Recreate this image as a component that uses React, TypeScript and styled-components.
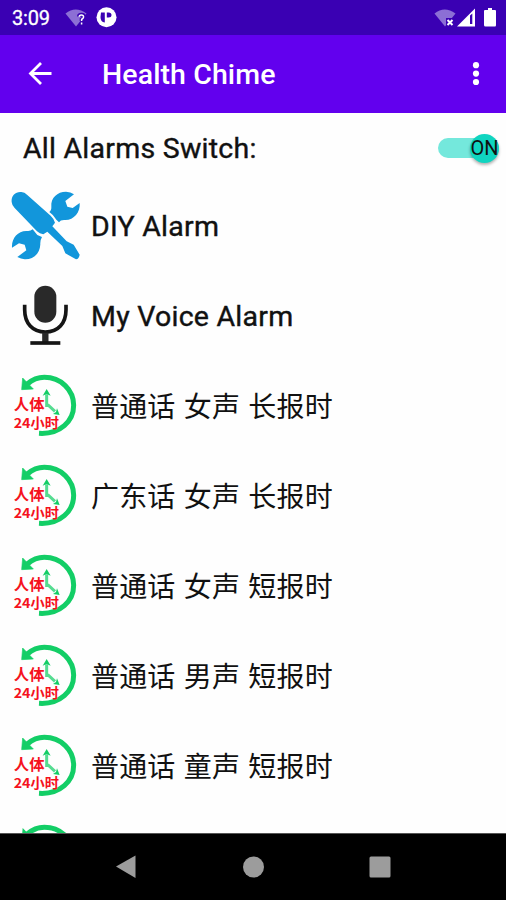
import React from "react";
import styled, { createGlobalStyle } from "styled-components";

const GlobalStyle = createGlobalStyle`
  * { box-sizing: border-box; }
  body { margin: 0; background: #fff; }
`;

const Screen = styled.div`
  width: 506px;
  height: 900px;
  display: flex;
  flex-direction: column;
  overflow: hidden;
  background: #fefefe;
  color: #111;
  font-family: Roboto, "Noto Sans CJK SC", sans-serif;
`;

const StatusBar = styled.header`
  height: 35px;
  flex: none;
  display: flex;
  align-items: center;
  justify-content: space-between;
  padding-left: 12px;
  background: #3a00b3;
  color: #fff;
`;

const StatusGroup = styled.div`
  display: flex;
  align-items: center;
  height: 35px;
`;

const Clock = styled.span`
  width: 48px;
  font-size: 20px;
  line-height: 35px;
  letter-spacing: -0.2px;
  padding-top: 1px;
  -webkit-text-stroke: 0.3px currentColor;
`;

const AppBar = styled.div`
  height: 78px;
  flex: none;
  display: flex;
  align-items: center;
  background: #6200ee;
  color: #fff;
`;

const IconButton = styled.button<{ $width: number }>`
  width: ${(p) => p.$width}px;
  height: 78px;
  padding: 0;
  border: 0;
  background: none;
  color: inherit;
  svg { display: block; }
`;

const Title = styled.h1`
  flex: 1;
  margin: 0;
  font-size: 28.5px;
  font-weight: 500;
  line-height: 78px;
  padding-top: 2px;
  letter-spacing: 0.1px;
`;

const Content = styled.main`
  height: 720px;
  flex: none;
  overflow: hidden;
`;

const SwitchRow = styled.div`
  height: 68px;
  display: flex;
  align-items: center;
  justify-content: space-between;
  padding: 2px 7px 0 23px;
`;

const Label = styled.span`
  padding-top: 2px;
  font-size: 28.5px;
  line-height: 40px;
  letter-spacing: 0.25px;
  white-space: pre;
  -webkit-text-stroke: 0.4px currentColor;
`;

const ChimeLabel = styled(Label)`
  padding-top: 3px;
  font-size: 28px;
  letter-spacing: 0.15px;
  word-spacing: 1.2px;
  -webkit-text-stroke: 0;
`;

const Track = styled.div`
  width: 61px;
  height: 20px;
  display: flex;
  align-items: center;
  justify-content: flex-end;
  border-radius: 10px;
  background: #74e8dc;
`;

const Thumb = styled.div`
  width: 29px;
  height: 29px;
  flex: none;
  display: flex;
  align-items: center;
  justify-content: center;
  border-radius: 50%;
  background: #10d5c0;
  box-shadow: 0 2px 3px rgba(0, 0, 0, 0.3);
  font-size: 20px;
  line-height: 29px;
`;

const Row = styled.div`
  height: 90px;
  display: flex;
  align-items: center;
  svg { flex: none; }
`;

const NavBar = styled.nav`
  height: 67px;
  flex: none;
  display: flex;
  align-items: center;
  justify-content: center;
  background: #000;
  border-top: 1px solid #555;
`;

const NavCell = styled.div`
  width: 126.5px;
  display: flex;
  justify-content: center;
`;

const ToolsIcon = () => (
  <svg width="91" height="90" viewBox="0 3 273 270" fill="#1296db">
    <path d="M35 66C33 48 46 34 64 36Q74 37 81 44L152 107Q161 115 165 128L157 139L200 184L221 194L239 224Q237 236 228 238L196 220L187 198L142 155L130 163Q119 161 111 154L44 84Q36 77 35 66Z" />
    <path d="M148 96Q155 92 154 79C152 54 172 35 198 35Q212 35 222 43L196 63L202 80L218 84L239 69C242 98 219 123 192 120Q181 120 177 127L169 119Q160 104 148 96Z" />
    <path d="M98 148L112 165L126 171Q120 181 121 193C120 222 99 239 74 238Q63 237 52 231L79 211L74 194L57 190L36 203C34 175 54 151 82 153Q91 154 98 148Z" />
  </svg>
);

const MicIcon = () => (
  <svg width="91" height="90" viewBox="0 -12 273 270">
    <rect x="103" y="32" width="66" height="111" rx="33" fill="#292929" />
    <path d="M74 89V104C74 145 98 171 136 171S198 145 198 104V89" fill="none" stroke="#151515" strokeWidth="11" />
    <path d="M136 173V203" stroke="#292929" strokeWidth="19" />
    <path d="M91 204H181" stroke="#151515" strokeWidth="11" />
  </svg>
);

const ClockText = styled.text`
  font-family: "Noto Sans CJK SC", sans-serif;
  font-weight: 700;
  fill: #f5121d;
`;

const BodyClockIcon = () => (
  <svg width="91" height="90" viewBox="0 -12 273 270">
    <path d="M82 57C98 43 114 37 133 37C183 37 221 75 221 121C221 168 181 209 117 205" fill="none" stroke="#13ce66" strokeWidth="15" />
    <path d="M68 39L65 74L100 72Z" fill="#13ce66" stroke="#13ce66" strokeWidth="2" />
    <path d="M140 126V88M143 119L165 139" fill="none" stroke="#55dc91" strokeWidth="9" />
    <path d="M140 72L128 92L140 87L152 92ZM179 150L159 147L168 141L171 130Z" fill="#13ce66" />
    <ClockText x="41" y="135" fontSize="46" textLength="93">人体</ClockText>
    <ClockText x="41" y="188" fontSize="40" textLength="136" lengthAdjust="spacingAndGlyphs">24小时</ClockText>
  </svg>
);

const WifiShape = () => (
  <path d="M0 5Q10-3 21 5L10.5 18Z" fill="#8c6fd5" />
);

const chimes = [
  "普通话 女声 长报时",
  "广东话 女声 长报时",
  "普通话 女声 短报时",
  "普通话 男声 短报时",
  "普通话 童声 短报时",
];

export default function App() {
  return (
    <Screen>
      <GlobalStyle />
      <StatusBar>
        <StatusGroup>
          <Clock>3:09</Clock>
          <svg width="60" height="35" viewBox="60 0 60 35">
            <g transform="translate(65.5 8.5)"><WifiShape /></g>
            <path d="M79 16.5Q79 14.8 81.5 14.8T84 17Q84 18.2 81.7 19.5V21M81.7 22.5V25" stroke="#3a00b3" strokeWidth="4" fill="none" />
            <path d="M79.2 16.8Q79.3 15 81.4 15T83.6 17Q83.6 18.2 81.6 19.5V21M81.6 22.5V24.5" stroke="#fff" strokeWidth="1.5" fill="none" />
            <circle cx="106.5" cy="17.3" r="10" fill="#fff" />
            <path d="M101 12.5H104.8V22.5Q100.5 22 100.5 17ZM106.8 12.5H108.5Q111.5 12.5 111.5 15T108.5 17.5H106.8Z" fill="#3a00b3" />
          </svg>
        </StatusGroup>
        <StatusGroup>
          <svg width="76" height="35" viewBox="430 0 76 35">
            <g transform="translate(434.5 8.5)"><WifiShape /></g>
            <path d="M446 18H455V27H446Z" fill="#3a00b3" />
            <path d="M447.5 20L452.5 25M452.5 20L447.5 25" stroke="#fff" strokeWidth="2" />
            <path d="M457 26.5L475 8.5V26.5Z" fill="#fff" />
            <path d="M470 15.5L472.3 13.5V24H470Z" fill="#3a00b3" />
            <path d="M485 10H488V8H492V10H495Q496 10 496 11V25Q496 26.5 495 26.5H485.5Q484 26.5 484 25V11Q484 10 485 10Z" fill="#fff" />
          </svg>
        </StatusGroup>
      </StatusBar>

      <AppBar>
        <IconButton $width={102} aria-label="Back">
          <svg width="80" height="78" viewBox="0 0 80 78">
            <path d="M51.5 38.5H31M41 28L30.5 38.5L41 49" fill="none" stroke="currentColor" strokeWidth="2.8" />
          </svg>
        </IconButton>
        <Title>Health Chime</Title>
        <IconButton $width={60} aria-label="More options">
          <svg width="60" height="78" viewBox="446 35 60 78" fill="currentColor">
            <circle cx="476" cy="65.2" r="3.1" />
            <circle cx="476" cy="73.6" r="3.1" />
            <circle cx="476" cy="82" r="3.1" />
          </svg>
        </IconButton>
      </AppBar>

      <Content>
        <SwitchRow>
          <Label>All Alarms Switch:</Label>
          <Track><Thumb>ON</Thumb></Track>
        </SwitchRow>
        <Row><ToolsIcon /><Label>DIY Alarm</Label></Row>
        <Row><MicIcon /><Label>My Voice Alarm</Label></Row>
        {chimes.map((name) => (
          <Row key={name}><BodyClockIcon /><ChimeLabel>{name}</ChimeLabel></Row>
        ))}
        <PeekRow><ArcTop /></PeekRow>
      </Content>

      <NavBar>
        <NavCell>
          <svg width="22" height="24" viewBox="0 0 22 24"><path d="M0 11.5L19.5 0.5V23Z" fill="#9c9c9c" /></svg>
        </NavCell>
        <NavCell>
          <svg width="22" height="22" viewBox="0 0 22 22"><circle cx="11.5" cy="11" r="10.5" fill="#9c9c9c" /></svg>
        </NavCell>
        <NavCell>
          <svg width="22" height="22" viewBox="0 0 22 22"><rect x="0.5" y="0.5" width="21" height="21" rx="1.5" fill="#9c9c9c" /></svg>
        </NavCell>
      </NavBar>
    </Screen>
  );
}

const PeekRow = styled.div`
  height: 22px;
  overflow: hidden;
  svg { display: block; }
`;

const ArcTop = () => (
  <svg width="91" height="22" viewBox="0 -12 273 66">
    <path d="M82 57C98 43 114 37 133 37C183 37 221 75 221 121" fill="none" stroke="#13ce66" strokeWidth="15" />
    <path d="M68 39L65 74L100 72Z" fill="#13ce66" />
  </svg>
);
